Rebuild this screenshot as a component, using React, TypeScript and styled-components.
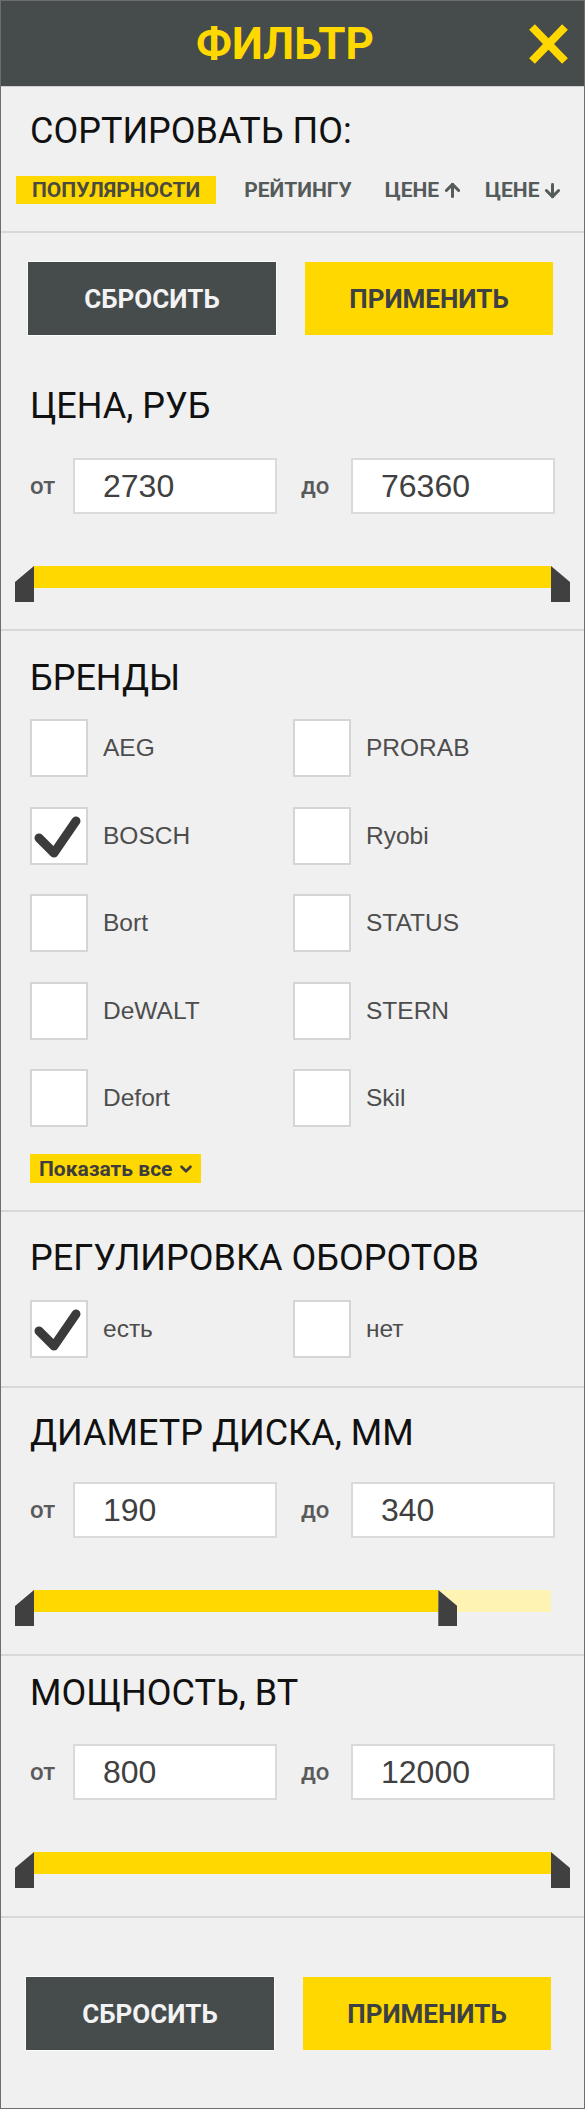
import React from "react";
import styled, { createGlobalStyle } from "styled-components";
import { ArrowDown, ArrowUp, ChevronDown } from "lucide-react";

const YELLOW = "#ffd800";
const DARK = "#464b4c";

const GlobalStyle = createGlobalStyle`
  * {
    box-sizing: border-box;
  }
  body {
    margin: 0;
    background: #f0f0f0;
    font-family: Roboto, "Liberation Sans", sans-serif;
  }
`;

type Range = { from: string; to: string; start: number; end: number };

const brands = [
  { name: "AEG", checked: false },
  { name: "PRORAB", checked: false },
  { name: "BOSCH", checked: true },
  { name: "Ryobi", checked: false },
  { name: "Bort", checked: false },
  { name: "STATUS", checked: false },
  { name: "DeWALT", checked: false },
  { name: "STERN", checked: false },
  { name: "Defort", checked: false },
  { name: "Skil", checked: false },
];

const CheckMark = () => (
  <svg width="58" height="58" viewBox="0 0 58 58">
    <polyline
      points="9,31 24,46 46,14"
      fill="none"
      stroke="#3b3b3b"
      strokeWidth="9"
      strokeLinecap="round"
      strokeLinejoin="round"
    />
  </svg>
);

const CloseIcon = () => (
  <svg width="41" height="40" viewBox="0 0 41 40">
    <path d="M4 3 L37 37 M37 3 L4 37" stroke={YELLOW} strokeWidth="8" fill="none" />
  </svg>
);

const Check = ({ label, checked }: { label: string; checked: boolean }) => (
  <CheckItem>
    <Box>{checked && <CheckMark />}</Box>
    <CheckLabel>{label}</CheckLabel>
  </CheckItem>
);

const RangeBlock = ({ range }: { range: Range }) => (
  <>
    <RangeRow>
      <RangeLabel>от</RangeLabel>
      <NumberInput defaultValue={range.from} />
      <RangeLabel $shift>до</RangeLabel>
      <NumberInput defaultValue={range.to} />
    </RangeRow>
    <Slider>
      <Fill style={{ left: `${range.start * 100}%`, width: `${(range.end - range.start) * 100}%` }} />
      <Thumb $side="left" style={{ left: `calc(${range.start * 100}% - 19px)` }} />
      <Thumb $side="right" style={{ left: `${range.end * 100}%` }} />
    </Slider>
  </>
);

const RangeFilter = ({ title, range, top, gap }: { title: string; range: Range; top: number; gap: number }) => (
  <Section $pt={top} $pb={28}>
    <Title $gap={gap}>{title}</Title>
    <RangeBlock range={range} />
  </Section>
);

const Buttons = () => (
  <ButtonRow>
    <ActionButton $primary={false}>СБРОСИТЬ</ActionButton>
    <ActionButton $primary>ПРИМЕНИТЬ</ActionButton>
  </ButtonRow>
);

export default function App() {
  return (
    <>
      <GlobalStyle />
      <Panel>
        <Header>
          <span />
          <HeaderTitle>ФИЛЬТР</HeaderTitle>
          <CloseButton>
            <CloseIcon />
          </CloseButton>
        </Header>

        <Section $pt={26.5} $pb={27}>
          <Title $gap={27.5}>СОРТИРОВАТЬ ПО:</Title>
          <SortRow>
            <SortItem $active>ПОПУЛЯРНОСТИ</SortItem>
            <SortItem $ml={28}>РЕЙТИНГУ</SortItem>
            <SortItem $ml={33}>
              ЦЕНЕ
              <ArrowUp size={21} strokeWidth={3.4} />
            </SortItem>
            <SortItem $ml={22}>
              ЦЕНЕ
              <ArrowDown size={21} strokeWidth={3.4} />
            </SortItem>
          </SortRow>
        </Section>

        <Section $pt={29} $pb={27}>
          <Buttons />
          <Title $gap={34.5} style={{ marginTop: 53.5 }}>
            ЦЕНА, РУБ
          </Title>
          <RangeBlock range={{ from: "2730", to: "76360", start: 0, end: 1 }} />
        </Section>

        <Section $pt={29.5} $pb={27}>
          <Title $gap={23.5}>БРЕНДЫ</Title>
          <CheckGrid>
            {brands.map((b) => (
              <Check key={b.name} label={b.name} checked={b.checked} />
            ))}
          </CheckGrid>
          <ShowAll>
            Показать все <ChevronDown size={18} strokeWidth={3.5} />
          </ShowAll>
        </Section>

        <Section $pt={28.5} $pb={28}>
          <Title $gap={24.5}>РЕГУЛИРОВКА ОБОРОТОВ</Title>
          <CheckGrid>
            <Check label="есть" checked />
            <Check label="нет" checked={false} />
          </CheckGrid>
        </Section>

        <RangeFilter
          title="ДИАМЕТР ДИСКА, ММ"
          range={{ from: "190", to: "340", start: 0, end: 0.782 }}
          top={27.5}
          gap={31.5}
        />
        <RangeFilter
          title="МОЩНОСТЬ, ВТ"
          range={{ from: "800", to: "12000", start: 0, end: 1 }}
          top={19.5}
          gap={33.5}
        />

        <Footer>
          <Buttons />
        </Footer>
      </Panel>
    </>
  );
}

const Panel = styled.div`
  width: 585px;
  min-height: 2109px;
  border: 1px solid #6d6d6d;
  background: #f0f0f0;
`;

const Header = styled.header`
  display: grid;
  grid-template-columns: 1fr auto 1fr;
  align-items: center;
  height: 86px;
  padding-right: 15px;
  background: ${DARK};
  border-bottom: 1px solid #d0d0d0;
`;

const HeaderTitle = styled.h1`
  margin: 0;
  font-family: Roboto, sans-serif;
  font-weight: 700;
  font-size: 44px;
  line-height: 1;
  color: ${YELLOW};
`;

const CloseButton = styled.button`
  justify-self: end;
  display: flex;
  padding: 0;
  border: 0;
  background: none;
  cursor: pointer;
`;

const Section = styled.section<{ $pt: number; $pb: number }>`
  display: flex;
  flex-direction: column;
  align-items: flex-start;
  padding: ${(p) => p.$pt}px 0 ${(p) => p.$pb}px 29px;
  border-bottom: 2px solid #d8d8d8;
`;

const Footer = styled.div`
  padding: 59px 0 0 27px;
`;

const Title = styled.h2<{ $gap: number }>`
  margin: 0 0 ${(p) => p.$gap}px;
  font-family: Roboto, sans-serif;
  font-weight: 400;
  font-size: 36px;
  line-height: 35px;
  color: #111;
`;

const SortRow = styled.div`
  display: flex;
  align-items: center;
  margin-left: -14px;
`;

const SortItem = styled.span<{ $active?: boolean; $ml?: number }>`
  display: inline-flex;
  align-items: center;
  gap: 3px;
  height: 28px;
  margin-left: ${(p) => p.$ml ?? 0}px;
  padding: 0 ${(p) => (p.$active ? "16px" : "0")};
  font-family: Roboto, sans-serif;
  font-weight: 700;
  font-size: 21px;
  line-height: 28px;
  color: ${(p) => (p.$active ? "#4a4a40" : "#555a5b")};
  background: ${(p) => (p.$active ? YELLOW : "transparent")};
  white-space: nowrap;
`;

const ButtonRow = styled.div`
  display: grid;
  grid-template-columns: 248px 248px;
  column-gap: 29px;
  margin-left: -2px;
`;

const ActionButton = styled.button<{ $primary: boolean }>`
  height: 73px;
  border: 0;
  padding: 0;
  font-family: Roboto, sans-serif;
  font-weight: 700;
  font-size: 26px;
  color: ${(p) => (p.$primary ? "#3d4144" : "#f3f3f3")};
  background: ${(p) => (p.$primary ? YELLOW : DARK)};
  box-shadow: ${(p) => (p.$primary ? "none" : "0 0 0 1px #fbfbfb")};
  cursor: pointer;
`;

const RangeRow = styled.div`
  display: flex;
  align-items: center;
  height: 56px;
  margin-bottom: 52px;
`;

const RangeLabel = styled.span<{ $shift?: boolean }>`
  width: ${(p) => (p.$shift ? "74px" : "43px")};
  padding-left: ${(p) => (p.$shift ? "24px" : "0")};
  font-family: Roboto, sans-serif;
  font-weight: 500;
  font-size: 24px;
  color: #5a5a5a;
`;

const NumberInput = styled.input`
  width: 204px;
  height: 56px;
  padding: 0 0 0 28px;
  border: 2px solid #dadada;
  background: #fff;
  font-family: "Liberation Sans", Arial, sans-serif;
  font-size: 32px;
  color: #404040;
  outline: none;
`;

const Slider = styled.div`
  position: relative;
  width: 517px;
  height: 36px;
  margin-left: 4px;
  &::before {
    content: "";
    position: absolute;
    left: 0;
    right: 0;
    top: 0;
    height: 22px;
    background: #fff3b3;
  }
`;

const Fill = styled.div`
  position: absolute;
  top: 0;
  height: 22px;
  background: ${YELLOW};
`;

const Thumb = styled.div<{ $side: "left" | "right" }>`
  position: absolute;
  top: 0;
  width: 19px;
  height: 36px;
  background: #404040;
  clip-path: ${(p) =>
    p.$side === "left"
      ? "polygon(0 16px, 100% 0, 100% 100%, 0 100%)"
      : "polygon(0 0, 100% 16px, 100% 100%, 0 100%)"};
`;

const CheckGrid = styled.div`
  display: grid;
  grid-template-columns: 263px 263px;
  row-gap: 29.5px;
`;

const CheckItem = styled.label`
  display: flex;
  align-items: center;
  gap: 15px;
  cursor: pointer;
`;

const Box = styled.span`
  display: flex;
  width: 58px;
  height: 58px;
  border: 2px solid #d5d5d5;
  background: #fff;
  svg {
    margin: -2px;
  }
`;

const CheckLabel = styled.span`
  font-family: "Liberation Sans", Arial, sans-serif;
  font-size: 24.5px;
  color: #4d4d4d;
`;

const ShowAll = styled.button`
  display: inline-flex;
  align-items: center;
  gap: 5px;
  height: 29px;
  margin-top: 27px;
  padding: 0 6px 0 9px;
  border: 0;
  background: ${YELLOW};
  font-family: Roboto, sans-serif;
  font-weight: 700;
  font-size: 21px;
  color: #3d3d3d;
  cursor: pointer;
`;
